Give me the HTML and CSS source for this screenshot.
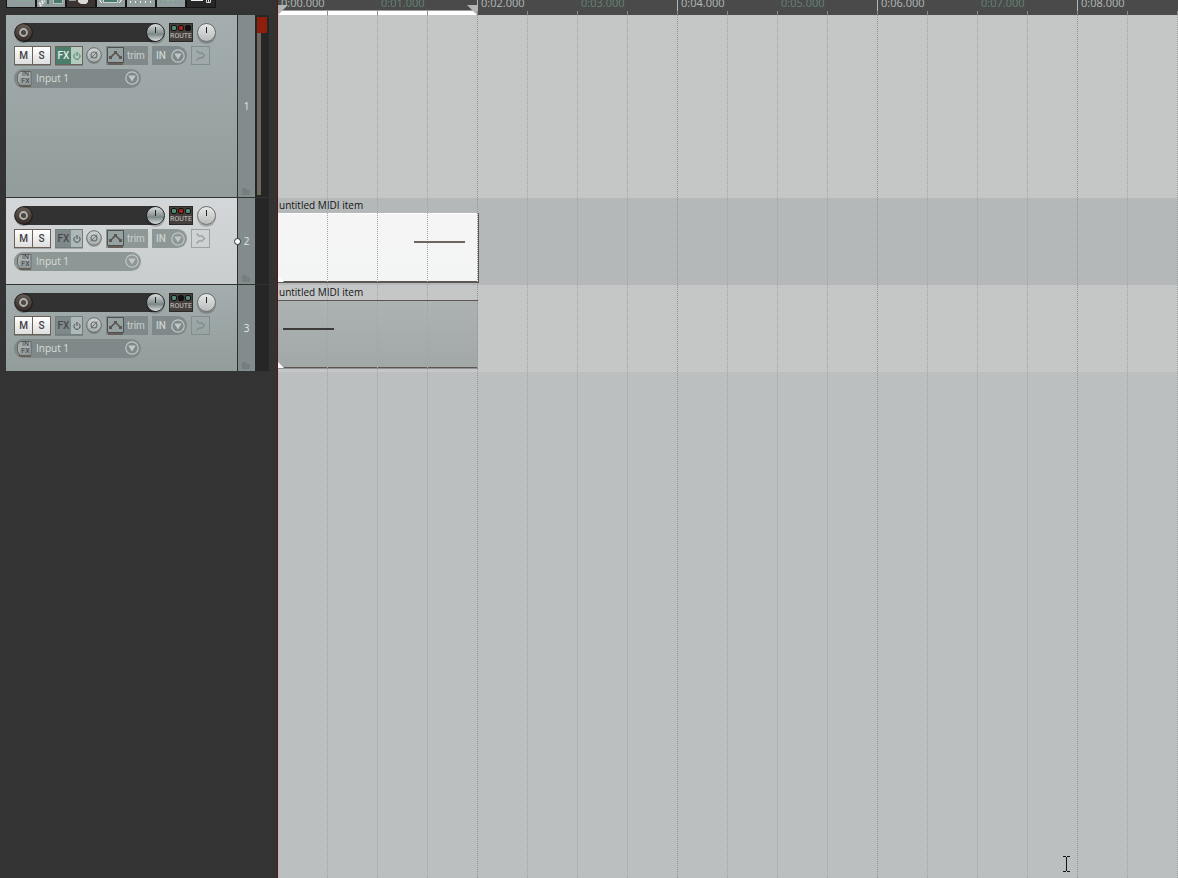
FILE: index.html
```
<!DOCTYPE html>
<html lang="en">
<head>
  <meta charset="UTF-8">
  <title>Untitled project</title>
  <link rel="stylesheet" href="styles.css">
</head>
<body>

  <!-- Shared icons -->
  <svg class="icon-defs" width="0" height="0" aria-hidden="true">
    <defs>
      <linearGradient id="armFill" x1="0" y1="0" x2="0" y2="1">
        <stop offset="0" stop-color="#655b54"/>
        <stop offset="1" stop-color="#332c28"/>
      </linearGradient>
      <linearGradient id="phaseFill" x1="0" y1="0" x2="0" y2="1">
        <stop offset="0" stop-color="#fff" stop-opacity=".5"/>
        <stop offset="1" stop-color="#fff" stop-opacity=".1"/>
      </linearGradient>
    </defs>
    <symbol id="arm" viewBox="0 0 19 20">
      <circle cx="9.500" cy="11" r="9" fill="#000" opacity=".3"/>
      <circle cx="9.500" cy="9.500" r="8.800" fill="url(#armFill)" stroke="#1f1b19"/>
      <circle cx="9.500" cy="9.500" r="3.500" fill="#4b4643" stroke="#b5b3ae" stroke-width="1.800"/>
    </symbol>
    <symbol id="power" viewBox="0 0 8 8">
      <path d="M2.300 1.600A3.100 3.100 0 1 0 5.700 1.600M4 0V4" fill="none" stroke="currentColor"/>
    </symbol>
    <symbol id="phase" viewBox="0 0 16 18">
      <circle cx="8" cy="9.500" r="7.500" fill="#000" opacity=".2"/>
      <circle cx="8" cy="8" r="7.300" fill="#9ba5a5"/>
      <circle cx="8" cy="8" r="7.300" fill="url(#phaseFill)" stroke="#6b6d6c"/>
      <circle cx="8" cy="8" r="3" fill="none" stroke="#6c706f" stroke-width="1.200"/>
      <path d="M4.500 11.500L11.500 4.500" stroke="#6c706f"/>
    </symbol>
    <symbol id="envelope" viewBox="0 0 17 19">
      <path d="M1 16h15v2H1z" fill="#675e57"/>
      <path d="M.5 .5h16v15H.5z" fill="#96a1a1" stroke="#4c5050"/>
      <path d="M3.500 10.500L8.500 5.500L13.500 10.500" fill="none" stroke="#5a5753" stroke-width="1.600"/>
      <path d="M2 9h3v3H2zM7 4h3v3H7zM12 9h3v3h-3z" fill="#5a5753"/>
    </symbol>
    <symbol id="down" viewBox="0 0 14 14">
      <circle cx="7" cy="7" r="6.200" fill="none" stroke="#c0c7c6" stroke-width="1.200"/>
      <path d="M3.300 4.500h7.400L7 10.500z" fill="#c0c7c6"/>
    </symbol>
    <symbol id="split" viewBox="0 0 10 11">
      <path d="M.5 .5L3 3H6L8.500 5.500L6 8H3L.5 10.500" fill="none" stroke="currentColor" stroke-width="1.500"/>
    </symbol>
    <symbol id="infx" viewBox="0 0 18 19">
      <path d="M4 16h13v2H6z" fill="#675e57"/>
      <path d="M6 2.500H17V16H6L3.500 12V6z" fill="#a5afaf" stroke="#686763"/>
      <path d="M6 9H16.500v6.500H6z" fill="#939d9d"/>
    </symbol>
    <symbol id="folder" viewBox="0 0 9 7">
      <path d="M0 0H4L5 2H8V7H0z" fill="#757f7f"/>
    </symbol>
  </svg>

  <div class="app">

    <!-- Left side: toolbar and track panels -->
    <div class="control-panel">
      <div class="toolbar">
        <button type="button" aria-label="New project"><svg width="28" height="7"><path d="M10 0h14v1H10z" fill="#8bab98"/></svg></button>
        <button type="button" aria-label="Open project"><svg width="28" height="7"><path d="M2 4L7 0M3 6L8 1" stroke="#e6eae9" stroke-width="2" stroke-dasharray="2 1"/><path d="M10 0h2v4h-2z" fill="#46685d"/><path d="M17 0h8v3h-8z" fill="#487868"/><path d="M16.500 0v3.500h9V0" stroke="#b5c1be" fill="none"/></svg></button>
        <button type="button" class="dark" aria-label="Save project"><svg width="28" height="7"><path d="M2 0h7v1H2z" fill="#8e9b9d"/><path d="M11 0h10v2l-2 2h-5l-3-2z" fill="#dadad5"/></svg></button>
        <button type="button" aria-label="Project settings"><svg width="28" height="7"><path d="M7 0h13v2H7z" fill="#487868"/><path d="M6.500 0v2.500h14V0" stroke="#c8d2d0" fill="none"/><path d="M3 0v1l2 2M24 0v1l-2 2" stroke="#fff" fill="none"/></svg></button>
        <button type="button" aria-label="Grid"><svg width="28" height="7"><path d="M3 2H27" stroke="#eef1f0" stroke-width="2" stroke-dasharray="1 4"/></svg></button>
        <button type="button" aria-label="Snap"><svg width="28" height="7"><path d="M3 2H27" stroke="#79988a" stroke-width="2" stroke-dasharray="1 4"/><path d="M7 0h11v1H7z" fill="#8bab98"/></svg></button>
        <button type="button" class="black" aria-label="Lock"><svg width="28" height="7"><path d="M4 0h12v1H4z" fill="#eee"/><path d="M19.500 0v2.500h4V0M21.500 0v2" stroke="#ddd" fill="none"/></svg></button>
      </div>

      <!-- Track 1 -->
      <div class="track track-tall">
        <div class="track-controls">
          <div class="row">
            <button type="button" class="arm" aria-label="Record arm 1"><svg width="19" height="20"><use href="#arm"/></svg></button>
            <input type="range" class="volume" value="100" aria-label="Volume 1">
            <button type="button" class="route"><span class="leds"><i class="on"></i><i class="red"></i><i></i></span>ROUTE</button>
            <input type="range" class="pan" value="50" aria-label="Pan 1">
          </div>
          <div class="row">
            <div class="mute-solo"><button type="button">M</button><button type="button">S</button></div>
            <div class="fx active"><button type="button">FX</button><button type="button" aria-label="Bypass FX 1"><svg width="8" height="8"><use href="#power"/></svg></button></div>
            <button type="button" class="plain phase" aria-label="Invert phase 1"><svg width="16" height="18"><use href="#phase"/></svg></button>
            <button type="button" class="plain trim"><svg width="17" height="19"><use href="#envelope"/></svg>trim</button>
            <button type="button" class="plain monitor">IN<svg width="14" height="14"><use href="#down"/></svg></button>
            <button type="button" class="record-mode" aria-label="Record mode 1"><svg width="10" height="11"><use href="#split"/></svg></button>
          </div>
          <div class="input-row">
            <button type="button" class="plain infx" aria-label="Input FX 1"><svg width="18" height="19"><use href="#infx"/></svg><span>IN<br>FX</span></button>
            <select aria-label="Input 1"><option>Input 1</option></select>
            <svg class="arrow" width="14" height="14"><use href="#down"/></svg>
          </div>
        </div>
        <div class="track-number">1<svg width="9" height="7"><use href="#folder"/></svg></div>
        <div class="meter"><div class="clip-led"></div><div class="level"></div></div>
      </div>

      <!-- Track 2 -->
      <div class="track selected">
        <div class="track-controls">
          <div class="row">
            <button type="button" class="arm" aria-label="Record arm 2"><svg width="19" height="20"><use href="#arm"/></svg></button>
            <input type="range" class="volume" value="100" aria-label="Volume 2">
            <button type="button" class="route"><span class="leds"><i class="on"></i><i class="red"></i><i class="on"></i></span>ROUTE</button>
            <input type="range" class="pan" value="50" aria-label="Pan 2">
          </div>
          <div class="row">
            <div class="mute-solo"><button type="button">M</button><button type="button">S</button></div>
            <div class="fx"><button type="button">FX</button><button type="button" aria-label="Bypass FX 2"><svg width="8" height="8"><use href="#power"/></svg></button></div>
            <button type="button" class="plain phase" aria-label="Invert phase 2"><svg width="16" height="18"><use href="#phase"/></svg></button>
            <button type="button" class="plain trim"><svg width="17" height="19"><use href="#envelope"/></svg>trim</button>
            <button type="button" class="plain monitor">IN<svg width="14" height="14"><use href="#down"/></svg></button>
            <button type="button" class="record-mode" aria-label="Record mode 2"><svg width="10" height="11"><use href="#split"/></svg></button>
          </div>
          <div class="input-row">
            <button type="button" class="plain infx" aria-label="Input FX 2"><svg width="18" height="19"><use href="#infx"/></svg><span>IN<br>FX</span></button>
            <select aria-label="Input 2"><option>Input 1</option></select>
            <svg class="arrow" width="14" height="14"><use href="#down"/></svg>
          </div>
        </div>
        <div class="track-number"><span class="handle"></span>2<svg width="9" height="7"><use href="#folder"/></svg></div>
        <div class="meter"></div>
      </div>

      <!-- Track 3 -->
      <div class="track">
        <div class="track-controls">
          <div class="row">
            <button type="button" class="arm" aria-label="Record arm 3"><svg width="19" height="20"><use href="#arm"/></svg></button>
            <input type="range" class="volume" value="100" aria-label="Volume 3">
            <button type="button" class="route"><span class="leds"><i class="on"></i><i></i><i class="on"></i></span>ROUTE</button>
            <input type="range" class="pan" value="50" aria-label="Pan 3">
          </div>
          <div class="row">
            <div class="mute-solo"><button type="button">M</button><button type="button">S</button></div>
            <div class="fx"><button type="button">FX</button><button type="button" aria-label="Bypass FX 3"><svg width="8" height="8"><use href="#power"/></svg></button></div>
            <button type="button" class="plain phase" aria-label="Invert phase 3"><svg width="16" height="18"><use href="#phase"/></svg></button>
            <button type="button" class="plain trim"><svg width="17" height="19"><use href="#envelope"/></svg>trim</button>
            <button type="button" class="plain monitor">IN<svg width="14" height="14"><use href="#down"/></svg></button>
            <button type="button" class="record-mode" aria-label="Record mode 3"><svg width="10" height="11"><use href="#split"/></svg></button>
          </div>
          <div class="input-row">
            <button type="button" class="plain infx" aria-label="Input FX 3"><svg width="18" height="19"><use href="#infx"/></svg><span>IN<br>FX</span></button>
            <select aria-label="Input 3"><option>Input 1</option></select>
            <svg class="arrow" width="14" height="14"><use href="#down"/></svg>
          </div>
        </div>
        <div class="track-number">3<svg width="9" height="7"><use href="#folder"/></svg></div>
        <div class="meter"></div>
      </div>
    </div>

    <!-- Right side: ruler and arrange view -->
    <div class="arrange">
      <div class="ruler">
        <div class="loop">
          <svg width="10" height="10"><path d="M0 0H10L0 10z" fill="#b2b5b4"/></svg>
          <svg width="10" height="10"><path d="M0 0H10V10z" fill="#b2b5b4"/></svg>
        </div>
        <span>0:00.000</span>
        <span>0:01.000</span>
        <span>0:02.000</span>
        <span>0:03.000</span>
        <span>0:04.000</span>
        <span>0:05.000</span>
        <span>0:06.000</span>
        <span>0:07.000</span>
        <span>0:08.000</span>
      </div>
      <div class="lanes">
        <div class="lane lane-tall"></div>
        <div class="lane selected">
          <div class="item-name">untitled MIDI item</div>
          <div class="item"><div class="note note-late"></div></div>
        </div>
        <div class="lane">
          <div class="item-name">untitled MIDI item</div>
          <div class="item"><div class="note"></div></div>
        </div>
        <svg class="cursor" width="7" height="16"><path d="M0 .5H3M4 .5H7M3.500 1V15M0 15.500H3M4 15.500H7" stroke="#151515" fill="none"/></svg>
      </div>
    </div>

  </div>

</body>
</html>
```
FILE: styles.css
```
* {
  box-sizing: border-box;
}

body {
  margin: 0;
  font-family: "Open Sans", "Noto Sans", sans-serif;
  font-size: 10px;
  background-color: #333;
  overflow: hidden;
}

.icon-defs {
  position: absolute;
}

svg {
  display: block;
}

button, input, select {
  font: inherit;
  margin: 0;
  padding: 0;
  border: none;
  background: none;
}

.app {
  display: flex;
  min-height: 100vh;
}

/* Left side */
.control-panel {
  width: 278px;
  flex: none;
  padding-left: 6px;
  border-right: 1px solid #5c1513;
}

.toolbar {
  display: flex;
  gap: 2px;
  width: 210px;
  height: 8px;
  margin-bottom: 7px;
  padding: 0 1px 1px;
  background-color: #161616;
}

.toolbar button {
  display: flex;
  flex: 1;
  align-items: flex-start;
  background-color: #919d9d;
  overflow: hidden;
}

.toolbar .dark {
  background-color: #3c3431;
}

.toolbar .black {
  background-color: #272727;
}

.track {
  --box: #7f898a;
  --line: #828d8d;
  display: flex;
  width: 263px;
  height: 87px;
  border-bottom: 1px solid #333;
}

.track-tall {
  height: 183px;
}

.track-controls {
  flex: 1;
  display: flex;
  flex-direction: column;
  gap: 4px;
  padding: 8px 0 0 8px;
  border-right: 1px solid #2d2e2e;
  background: linear-gradient(#a5aeaf, #929c9a);
}

.selected .track-controls {
  background: linear-gradient(#d4d7d9, #c9cdcd);
}

.track.selected {
  --box: #8d9796;
  --line: #9ba3a3;
}

.row {
  display: flex;
  height: 19px;
}

.arm {
  width: 19px;
  z-index: 1;
}

.volume, .pan {
  appearance: none;
  height: 19px;
}

.volume {
  width: 142px;
  margin-left: -10px;
  background: linear-gradient(to right, #323232 133px, transparent 133px);
}

.volume::-webkit-slider-thumb, .pan::-webkit-slider-thumb {
  appearance: none;
  width: 19px;
  height: 19px;
  border: 1px solid #6b6b69;
  border-radius: 50%;
  background: linear-gradient(#222, #222) center 3px / 1px 6px no-repeat,
    linear-gradient(#e6e7e7, #b9bcbc);
  box-shadow: 0 2px 0 rgba(0, 0, 0, 0.2);
}

.volume::-webkit-slider-thumb {
  border-color: #202222;
  background: linear-gradient(#222, #222) center 3px / 1px 6px no-repeat,
    linear-gradient(#d9dddd, #7d8787 60%, #d8dcdc);
}

.route {
  width: 24px;
  margin: 0 4px;
  border: 1px solid #2b2725;
  background-color: #453f3c;
  color: #c9c8c4;
  font: 7px/9px Roboto, sans-serif;
}

.leds {
  display: flex;
  justify-content: center;
  gap: 1px;
  height: 7px;
}

.leds i {
  width: 6px;
  height: 6px;
  border: 1px solid #111;
  border-radius: 2px;
  background-color: #111;
}

.leds .on {
  background-color: #528877;
}

.leds .red {
  background-color: #a32413;
}

.pan {
  width: 19px;
}

.mute-solo {
  display: flex;
  width: 37px;
  margin-right: 4px;
  border: 1px solid #6b6159;
  box-shadow: 0 1px 0 rgba(0, 0, 0, 0.2);
}

.mute-solo button {
  flex: 1;
  background: linear-gradient(#fff, #dedede);
  color: #3f3f3f;
  font: 500 10px Roboto, sans-serif;
}

.mute-solo button + button {
  border-left: 1px solid #6b6159;
}

.fx {
  display: flex;
  width: 28px;
  border: 1px solid #747d7d;
  background-color: #7f898a;
  color: #484b4a;
  box-shadow: 0 1px 0 rgba(0, 0, 0, 0.2);
}

.fx button {
  width: 15px;
  color: inherit;
  font: 500 10px Roboto, sans-serif;
}

.fx button + button {
  display: flex;
  align-items: center;
  justify-content: center;
  width: 11px;
  background-color: #adb8b8;
}

.fx.active {
  border-color: #6b6159;
  background-color: #4b7d6b;
  color: #e4eae7;
}

.fx.active button + button {
  background-color: #b5cbbd;
  color: #4b7d6b;
}

.plain {
  background-color: var(--box);
  color: #cbd1d0;
}

.phase {
  width: 16px;
  margin: 0 4px 0 3px;
  padding-top: 1px;
  background: none;
}

.trim {
  display: flex;
  align-items: center;
  gap: 3px;
  width: 42px;
  padding-left: 1px;
  font: 10px Roboto, sans-serif;
}

.trim svg {
  margin-top: 2px;
}

.monitor {
  display: flex;
  align-items: center;
  gap: 5px;
  width: 35px;
  margin: 0 4px;
  padding-left: 4px;
  border-radius: 0 10px 10px 0;
  font: 500 10px Roboto, sans-serif;
}

.record-mode {
  display: flex;
  align-items: center;
  justify-content: center;
  width: 19px;
  border: 1px solid var(--line);
  color: var(--line);
}

.input-row {
  position: relative;
  display: flex;
  width: 127px;
  height: 19px;
  border-radius: 10px;
  background-color: var(--box);
}

.infx {
  position: relative;
  width: 18px;
  margin-right: 4px;
  border-radius: 10px 0 0 10px;
}

.infx span {
  position: absolute;
  inset: 2px 0 0 5px;
  color: #40403f;
  font: 7px/7px Roboto, sans-serif;
}

.input-row select {
  flex: 1;
  height: 18px;
  appearance: none;
  color: #d9ded5;
}

.arrow {
  position: absolute;
  right: 2px;
  top: 2px;
  pointer-events: none;
}

.track-number {
  position: relative;
  display: flex;
  align-items: center;
  justify-content: center;
  width: 17px;
  background-color: #828c8d;
  color: #e2e8e6;
}

.track-number svg {
  position: absolute;
  bottom: 2px;
  left: 4px;
}

.handle {
  position: absolute;
  left: -4px;
  width: 7px;
  height: 7px;
  border: 1px solid #2d2e2e;
  border-radius: 50%;
  background-color: #fff;
}

.meter {
  width: 14px;
  padding: 2px;
  display: flex;
  flex-direction: column;
  background-color: #262626;
}

.clip-led {
  height: 16px;
  background-color: #8f1e0c;
}

.level {
  flex: 1;
  width: 4px;
  background-color: #6e665d;
}

/* Right side */
.arrange {
  flex: 1;
  min-width: 0;
  display: flex;
  flex-direction: column;
}

.ruler {
  position: relative;
  display: flex;
  height: 15px;
  overflow: hidden;
  background-color: #4a4a4a;
}

/* half-second ticks */
.ruler::after {
  content: "";
  position: absolute;
  inset: 11px 0 0;
  background: linear-gradient(to right, transparent 49px, #8b8b8b 49px) 0 0 / 50px 100%;
}

.ruler span {
  position: relative;
  flex: none;
  width: 100px;
  height: 15px;
  padding-left: 3px;
  font-size: 11px;
  line-height: 6px;
  color: #b3bbb8;
}

.ruler span:nth-of-type(even) {
  color: #648475;
}

.ruler span:nth-of-type(odd)::before {
  content: "";
  position: absolute;
  left: -1px;
  top: 0;
  height: 15px;
  border-left: 1px solid #b5b5b5;
}

.loop {
  position: absolute;
  left: 0;
  bottom: 0;
  display: flex;
  justify-content: space-between;
  width: 199px;
  height: 10px;
  background: linear-gradient(transparent 5px, #9d9d9d 5px, #9d9d9d 6px, #fff 6px);
}

.lanes {
  position: relative;
  flex: 1;
  background-color: #bbbfc0;
}

/* dotted grid, the two-second lines are a little darker */
.lanes::after {
  content: "";
  position: absolute;
  inset: 0;
  background:
    linear-gradient(to right, transparent 199px, #8f9393 199px) 0 0 / 200px 100%,
    linear-gradient(to right, transparent 49px, #a0a4a4 49px) 0 0 / 50px 100%;
  mask-image: repeating-linear-gradient(#000 0 1px, transparent 1px 2px);
  pointer-events: none;
}

.lane {
  height: 87px;
  background-color: #c5c7c6;
}

.lane-tall {
  height: 183px;
}

.lane.selected {
  background-color: #b5b8b9;
}

.item-name {
  height: 15px;
  padding-left: 1px;
  line-height: 15px;
  color: #151515;
}

.item {
  position: relative;
  width: 200px;
  height: 68px;
  border: 1px solid #5d5753;
  border-width: 1px 0 1px 0;
  background: linear-gradient(#adb3b3, #a2a7a7);
  box-shadow: 0 1px 0 #8d9191;
}

/* fade handle in the bottom left corner */
.item::before {
  content: "";
  position: absolute;
  left: 0;
  bottom: -1px;
  border-top: 6px solid transparent;
  border-left: 6px solid #fff;
}

.selected .item {
  height: 70px;
  border-top-color: #fff;
  border-bottom-width: 2px;
  background: linear-gradient(#f5f5f5, #f3f5f4);
  box-shadow: 1px 0 0 #5d5753;
}

.note {
  position: relative;
  z-index: 1;
  width: 51px;
  height: 2px;
  margin: 27px 0 0 5px;
  background-color: #3d3a3a;
}

.note-late {
  margin-left: 136px;
  background-color: #6e665c;
}

.cursor {
  position: absolute;
  right: 108px;
  bottom: 6px;
}
```
